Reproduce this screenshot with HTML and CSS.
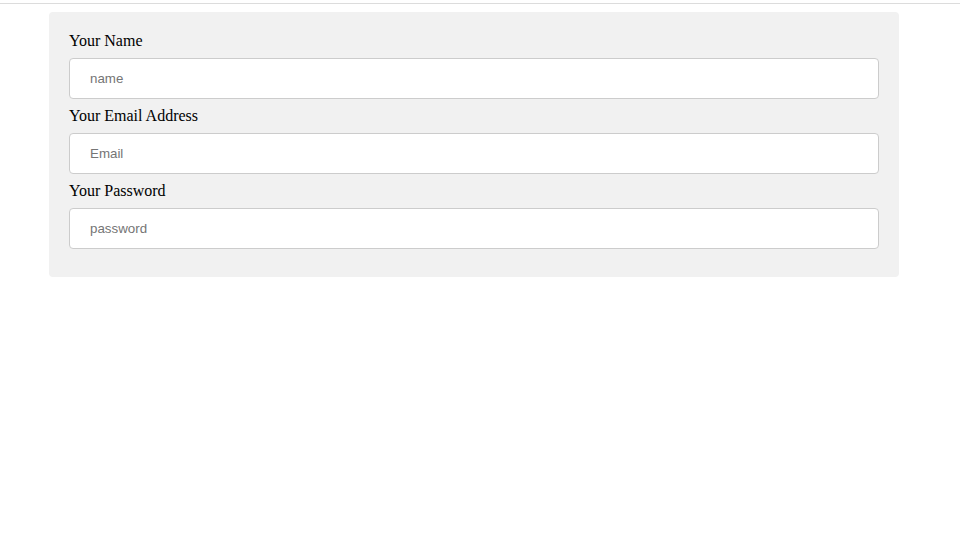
FILE: index.html
```html
<!DOCTYPE html>
<html>
<head>
<meta charset="utf-8">
<link rel="stylesheet" href="styles.css">
</head>
<body>
<div class="topline"></div>
<form class="card">
  <label class="label" for="name">Your Name</label>
  <input class="field" id="name" type="text" placeholder="name">
  <label class="label" for="email">Your Email Address</label>
  <input class="field" id="email" type="email" placeholder="Email">
  <label class="label" for="pw">Your Password</label>
  <input class="field" id="pw" type="password" placeholder="password">
</form>
</body>
</html>
```
FILE: styles.css
```css
html, body {
  margin: 0;
  padding: 0;
  background: #fff;
}
body {
  font-family: "Liberation Serif", "Times New Roman", serif;
  font-size: 16px;
}
.topline {
  margin-top: 3px;
  height: 1px;
  background: #dcdcdc;
}
.card {
  box-sizing: border-box;
  width: 850px;
  margin: 8px 0 0 49px;
  padding: 20px 20px 20px;
  background: #f1f1f1;
  border-radius: 4px;
  display: flex;
  flex-direction: column;
}
.label {
  display: block;
  line-height: 18px;
  margin-bottom: 8px;
  color: #000;
}
.field {
  box-sizing: border-box;
  width: 100%;
  height: 41px;
  margin: 0 0 8px;
  padding: 0 20px;
  border: 1px solid #cccccc;
  border-radius: 4px;
  background: #fff;
  font-family: "Liberation Sans", Arial, sans-serif;
  font-size: 13.33px;
  color: #000;
  outline: none;
}
.field::placeholder {
  color: #757575;
}
```
